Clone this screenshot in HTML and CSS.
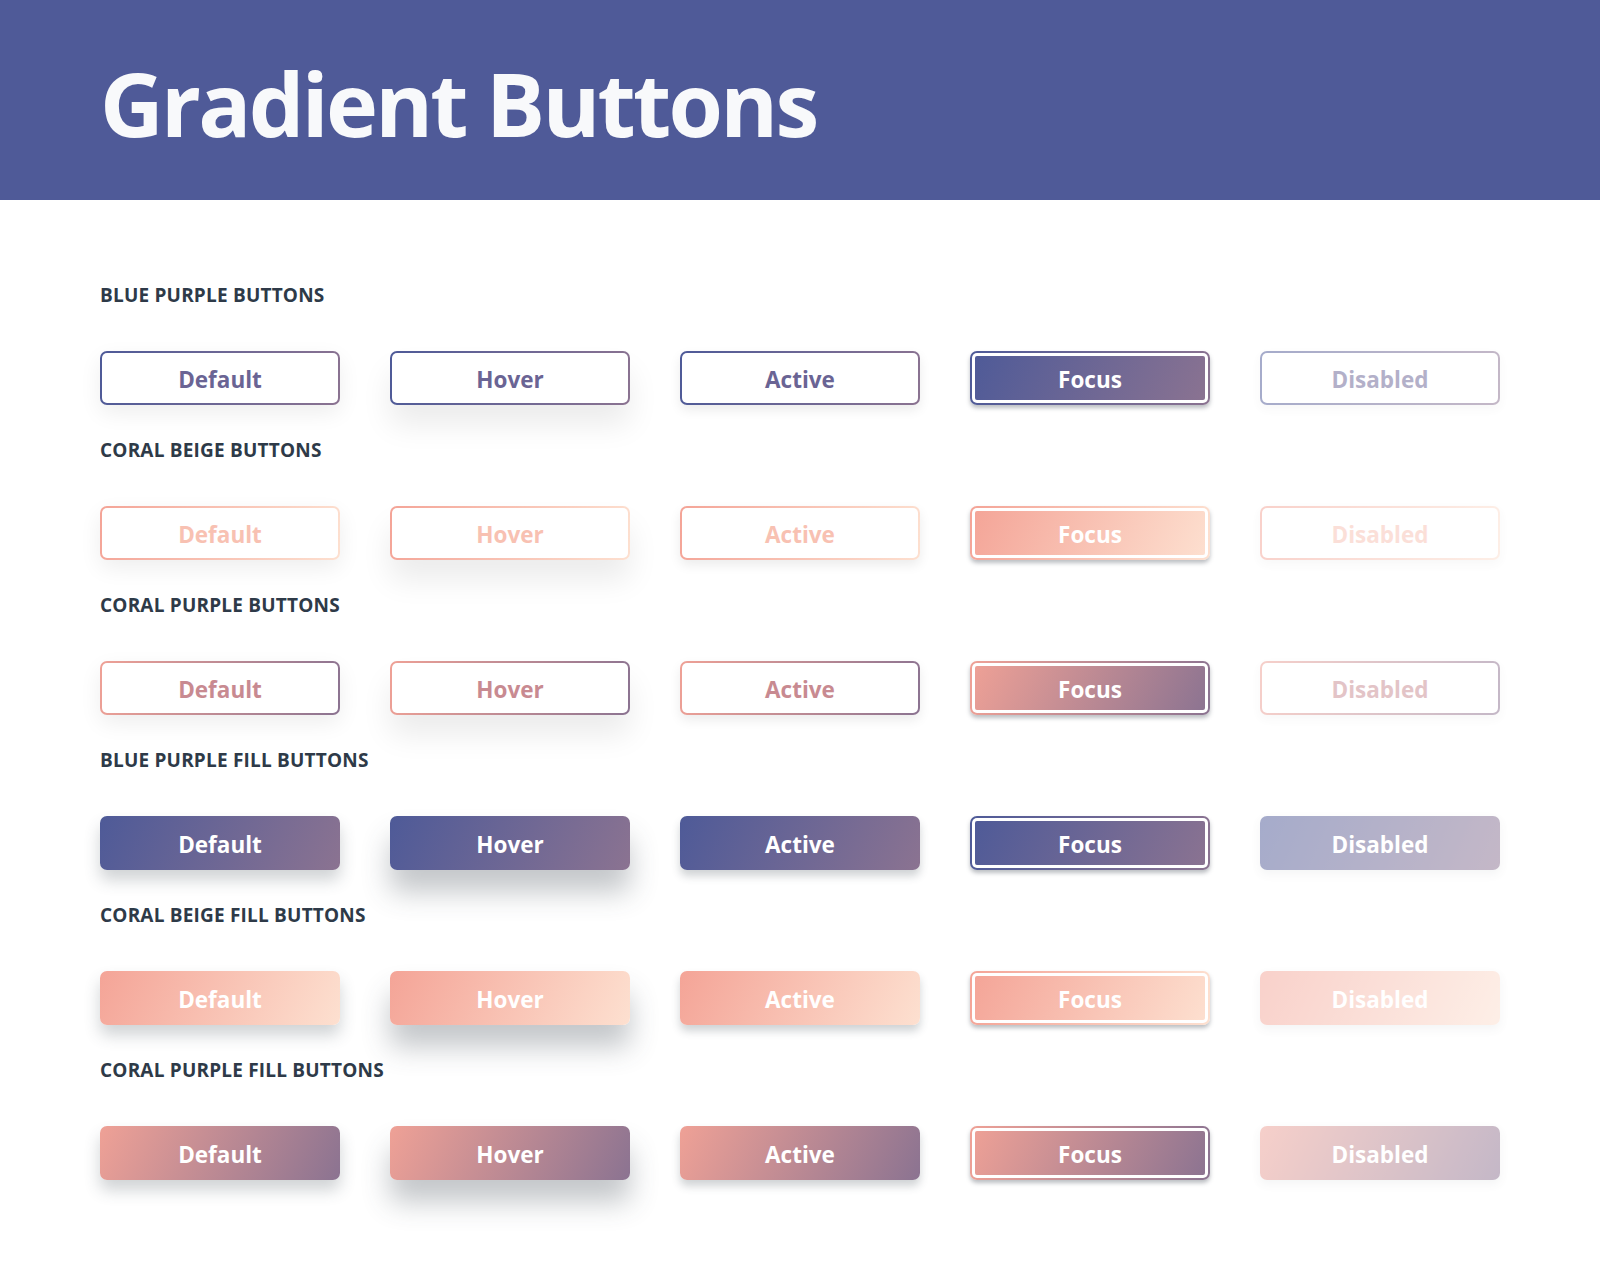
FILE: index.html
```html
<!DOCTYPE html>
<html lang="en">
<head>
<meta charset="utf-8">
<title>Gradient Buttons</title>
<link rel="stylesheet" href="styles.css">
</head>
<body>
<header class="hero">
  <h1 class="hero-title">Gradient Buttons</h1>
</header>
<main class="content">
  <section class="group bp outline">
    <h2 class="group-title">BLUE PURPLE BUTTONS</h2>
    <div class="row">
      <button class="btn s-default">Default</button>
      <button class="btn s-hover">Hover</button>
      <button class="btn s-active">Active</button>
      <button class="btn s-focus">Focus</button>
      <button class="btn s-disabled">Disabled</button>
    </div>
  </section>
  <section class="group cb outline">
    <h2 class="group-title">CORAL BEIGE BUTTONS</h2>
    <div class="row">
      <button class="btn s-default">Default</button>
      <button class="btn s-hover">Hover</button>
      <button class="btn s-active">Active</button>
      <button class="btn s-focus">Focus</button>
      <button class="btn s-disabled">Disabled</button>
    </div>
  </section>
  <section class="group cp outline">
    <h2 class="group-title">CORAL PURPLE BUTTONS</h2>
    <div class="row">
      <button class="btn s-default">Default</button>
      <button class="btn s-hover">Hover</button>
      <button class="btn s-active">Active</button>
      <button class="btn s-focus">Focus</button>
      <button class="btn s-disabled">Disabled</button>
    </div>
  </section>
  <section class="group bp fill">
    <h2 class="group-title">BLUE PURPLE FILL BUTTONS</h2>
    <div class="row">
      <button class="btn s-default">Default</button>
      <button class="btn s-hover">Hover</button>
      <button class="btn s-active">Active</button>
      <button class="btn s-focus">Focus</button>
      <button class="btn s-disabled">Disabled</button>
    </div>
  </section>
  <section class="group cb fill">
    <h2 class="group-title">CORAL BEIGE FILL BUTTONS</h2>
    <div class="row">
      <button class="btn s-default">Default</button>
      <button class="btn s-hover">Hover</button>
      <button class="btn s-active">Active</button>
      <button class="btn s-focus">Focus</button>
      <button class="btn s-disabled">Disabled</button>
    </div>
  </section>
  <section class="group cp fill">
    <h2 class="group-title">CORAL PURPLE FILL BUTTONS</h2>
    <div class="row">
      <button class="btn s-default">Default</button>
      <button class="btn s-hover">Hover</button>
      <button class="btn s-active">Active</button>
      <button class="btn s-focus">Focus</button>
      <button class="btn s-disabled">Disabled</button>
    </div>
  </section>
</main>
</body>
</html>
```
FILE: styles.css
```css
* { box-sizing: border-box; }

html, body { background: #ffffff; }

body {
  margin: 0;
  min-height: 1280px;
  font-family: "Open Sans", "Noto Sans", "Liberation Sans", sans-serif;
}

.hero {
  height: 200px;
  background: #4f5a98;
  padding: 59px 0 0 100px;
}

.hero-title {
  margin: 0;
  font-size: 88px;
  line-height: 88px;
  font-weight: 700;
  color: #f8f9fb;
  letter-spacing: -2.7px;
}

.content {
  padding: 84px 100px 66px;
}

.group {
  height: 155px;
}

.group-title {
  margin: 0 0 45px;
  font-size: 19px;
  line-height: 22px;
  font-weight: 700;
  color: #2e3a48;
  letter-spacing: 0.2px;
}

.row {
  display: grid;
  grid-template-columns: repeat(5, 240px);
  column-gap: 50px;
}

.btn {
  --c1: #4e5a98;
  --c2: #8b7391;
  --txt: #6a6494;
  --sh: 60, 70, 80;
  height: 54px;
  padding: 4px 0 0;
  border: 2px solid transparent;
  border-radius: 7px;
  font-family: inherit;
  font-size: 22.5px;
  font-weight: 700;
  line-height: 46px;
  letter-spacing: 0;
  text-align: center;
  cursor: pointer;
}

.bp .btn { --c1: #4e5a98; --c2: #8b7391; --txt: #6a6494; }
.cb .btn { --c1: #f4a497; --c2: #fde0d0; --txt: #f8c1b2; }
.cp .btn { --c1: #efa196; --c2: #8b7391; --txt: #c88a91; }

/* Outline buttons */
.outline .btn {
  color: var(--txt);
  background:
    linear-gradient(#ffffff, #ffffff) padding-box,
    linear-gradient(100deg, var(--c1), var(--c2)) border-box;
}

.outline .s-default { box-shadow: 0 8px 22px rgba(0, 0, 0, 0.07); }
.outline .s-hover { box-shadow: 0 20px 30px rgba(0, 0, 0, 0.08); }
.outline .s-active { box-shadow: 0 5px 12px rgba(0, 0, 0, 0.08); }
.outline .s-disabled { opacity: 0.5; box-shadow: 0 4px 10px rgba(0, 0, 0, 0.05); }

/* Fill buttons */
.fill .btn {
  color: #ffffff;
  background: linear-gradient(115deg, var(--c1), var(--c2)) border-box;
}

.fill .s-default { box-shadow: 0 10px 16px rgba(var(--sh), 0.24); }
.fill .s-hover { box-shadow: 0 22px 28px rgba(var(--sh), 0.3); }
.fill .s-active { box-shadow: 0 6px 9px rgba(var(--sh), 0.24); }
.fill .s-disabled { opacity: 0.5; box-shadow: 0 4px 8px rgba(var(--sh), 0.1); }

/* Focus (both kinds) */
.btn.s-focus {
  color: #ffffff;
  background:
    linear-gradient(115deg, var(--c1), var(--c2)) padding-box,
    linear-gradient(100deg, var(--c1), var(--c2)) border-box;
  box-shadow: inset 0 0 0 3px #ffffff, 0 3px 4px rgba(var(--sh), 0.35);
}
```
